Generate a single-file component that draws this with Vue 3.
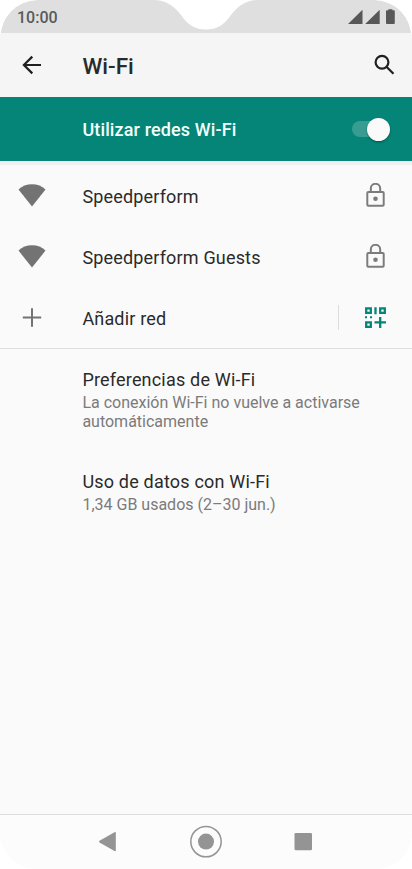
<script setup>
import { ref } from "vue"

const wifiOn = ref(true)
const networks = ref([
  { id: 1, name: "Speedperform" },
  { id: 2, name: "Speedperform Guests" },
])
const options = [
  {
    id: "prefs",
    title: "Preferencias de Wi-Fi",
    summary: "La conexión Wi-Fi no vuelve a activarse automáticamente",
  },
  {
    id: "data",
    title: "Uso de datos con Wi-Fi",
    summary: "1,34 GB usados (2–30 jun.)",
  },
]
</script>

<template>
  <div class="phone">
    <div class="status">
      <span class="clock">10:00</span>
      <svg class="status-icons" width="48" height="16" viewBox="0 0 48 16">
        <path d="M0 15 14.500 .7V15zM17.200 15 31.700 .7V15z" />
        <path d="M40.400 .2h4v1h1.400q1 0 1 1V14q0 1-1 1H39q-1 0-1-1V2.200q0-1 1-1h1.400z" />
      </svg>
    </div>

    <header>
      <svg class="back" width="24" height="24" viewBox="0 0 24 24">
        <path d="M21 12H4.500M12.300 3.600 3.900 12l8.400 8.400" />
      </svg>
      <h1>Wi-Fi</h1>
      <svg class="search" width="24" height="24" viewBox="0 0 24 24">
        <circle cx="9" cy="9.300" r="6.400" />
        <path d="m13.500 13.800 7 7" />
      </svg>
    </header>

    <div class="master" @click="wifiOn = !wifiOn">
      <span>Utilizar redes Wi-Fi</span>
      <div class="switch" :class="{ on: wifiOn }"><i></i></div>
    </div>

    <main>
      <div class="networks">
        <div v-for="network in networks" :key="network.id" class="row">
          <svg class="lead" width="28" height="24" viewBox="0 0 28 24">
            <path d="M.5 5.600Q6 .2 14 .2t13.500 5.400L14 22.600z" fill="#737373" />
          </svg>
          <span class="name">{{ network.name }}</span>
          <svg class="lock" width="20" height="26" viewBox="0 0 20 26">
            <rect x="1.300" y="9" width="16.400" height="13.800" rx="1" />
            <path d="M4.800 8.600V5.500a4.700 4.700 0 0 1 9.400 0v3.100" />
            <circle cx="9.500" cy="15.800" r="2.300" />
          </svg>
        </div>

        <div class="row">
          <svg class="lead" width="28" height="24" viewBox="0 0 28 24">
            <path d="M14 2.300v18.400M4.800 11.500h18.400" stroke="#737373" stroke-width="2" />
          </svg>
          <span class="name">Añadir red</span>
          <span class="divider"></span>
          <svg class="qr" width="22" height="22" viewBox="0 0 22 22">
            <g fill="none" stroke="#048577" stroke-width="2.300">
              <path d="M2.200 1.300h4.600v4.600H2.200zM16.200 1.300h4.600v4.600h-4.600zM2.200 15.300h4.600v4.600H2.200z" />
              <path d="M11.500 .2v7M16.200 10v11M10.500 15.400H22" />
            </g>
            <path d="M1 9.300h2v2H1zM6 9.300h2v2H6z" fill="#048577" />
          </svg>
        </div>
      </div>

      <div v-for="option in options" :key="option.id" class="option" :class="option.id">
        <p class="title">{{ option.title }}</p>
        <p class="summary">{{ option.summary }}</p>
      </div>
    </main>

    <nav>
      <svg width="412" height="54" viewBox="0 0 412 54">
        <path d="M99.500 25.800 114.500 17.200q1.300-.7 1.300.6v17.700q0 1.200-1.300.5L99.500 27.400q-1-.8 0-1.600z" />
        <circle cx="206" cy="26.600" r="15.200" fill="none" stroke="#949494" stroke-width="1.500" />
        <circle cx="206" cy="26.600" r="8" />
        <rect x="294.500" y="18" width="17.500" height="17.300" rx="1.300" />
      </svg>
    </nav>
  </div>
</template>

<style>
body {
  background: white;
}
</style>

<style scoped>
.phone {
  width: 412px;
  height: 869px;
  display: flex;
  flex-direction: column;
  overflow: hidden;
  font-family: Roboto, sans-serif;
  color: #2a2a2a;
  background: linear-gradient(white 33px, #fafafa 33px);
  border-radius: 38px 38px 37px 37px;
}

/* clipped around the display cutout */
.status {
  height: 33px;
  flex: none;
  display: flex;
  justify-content: space-between;
  align-items: center;
  box-sizing: border-box;
  padding: 0 16px 0 17px;
  background-color: #dfdfdf;
  clip-path: path("M1 33C3 14 19 0 37 0H153C166 0 174 6 181 15C188 25 195 29.500 206 29.500C217 29.500 224 25 231 15C238 6 246 0 259 0H374C394 0 409 15 411 33Z");
}

.clock {
  color: #5a5a5a;
  font-size: 16px;
  font-weight: 500;
  line-height: 19px;
  padding-top: 2px;
}

.status-icons {
  fill: #575757;
}

header {
  height: 64px;
  flex: none;
  display: flex;
  align-items: center;
  padding: 0 15px 0 20px;
  background-color: #f5f5f5;
}

.back,
.search {
  fill: none;
  stroke: #202020;
  stroke-width: 2.200;
}

h1 {
  flex: 1;
  margin: 2px 0 0 38.5px;
  font-size: 22.5px;
  font-weight: 500;
  line-height: 28px;
}

.master {
  height: 64px;
  flex: none;
  display: flex;
  align-items: center;
  justify-content: space-between;
  padding: 0 22px 0 82.4px;
  background-color: #048577;
  color: #f3fffc;
  font-size: 18px;
  font-weight: 500;
  letter-spacing: 0.13px;
  cursor: pointer;
}

.switch {
  width: 38px;
  height: 16px;
  display: flex;
  align-items: center;
  background-color: #379d92;
  border-radius: 8px;
}

.switch i {
  width: 23px;
  height: 23px;
  border-radius: 50%;
  background-color: #fafafa;
  box-shadow: 0 1px 2px rgb(0, 0, 0, 0.4);
}

.switch.on i {
  margin-left: auto;
}

main {
  flex: 1;
  border-top: 4px solid #f0f0f0;
}

.networks {
  border-bottom: 1px solid #dedede;
}

.row {
  height: 61px;
  display: flex;
  align-items: center;
  padding: 0 26px 0 18px;
}

.lead {
  margin-right: 36.4px;
}

.name {
  flex: 1;
  padding-top: 2px;
  font-size: 18px;
  line-height: 22px;
  letter-spacing: 0.17px;
}

.lock {
  fill: none;
  stroke: #7c7c7c;
  stroke-width: 2;
}

.lock circle {
  fill: #7c7c7c;
  stroke: none;
}

.divider {
  width: 1px;
  height: 25px;
  background-color: #dcdcdc;
  margin-right: 25px;
}

.option {
  padding: 19px 40px 0 82.4px;
}

.option.data {
  padding-top: 39px;
}

.option p {
  margin: 0;
}

.title {
  font-size: 18px;
  line-height: 24px;
  letter-spacing: 0.19px;
}

.option .summary {
  margin-top: 1px;
  font-size: 16px;
  line-height: 19px;
  color: #7b7b7b;
}

nav {
  height: 54px;
  flex: none;
  border-top: 1px solid #dedede;
  background-color: #fcfcfc;
}

nav svg {
  display: block;
  fill: #949494;
}
</style>
